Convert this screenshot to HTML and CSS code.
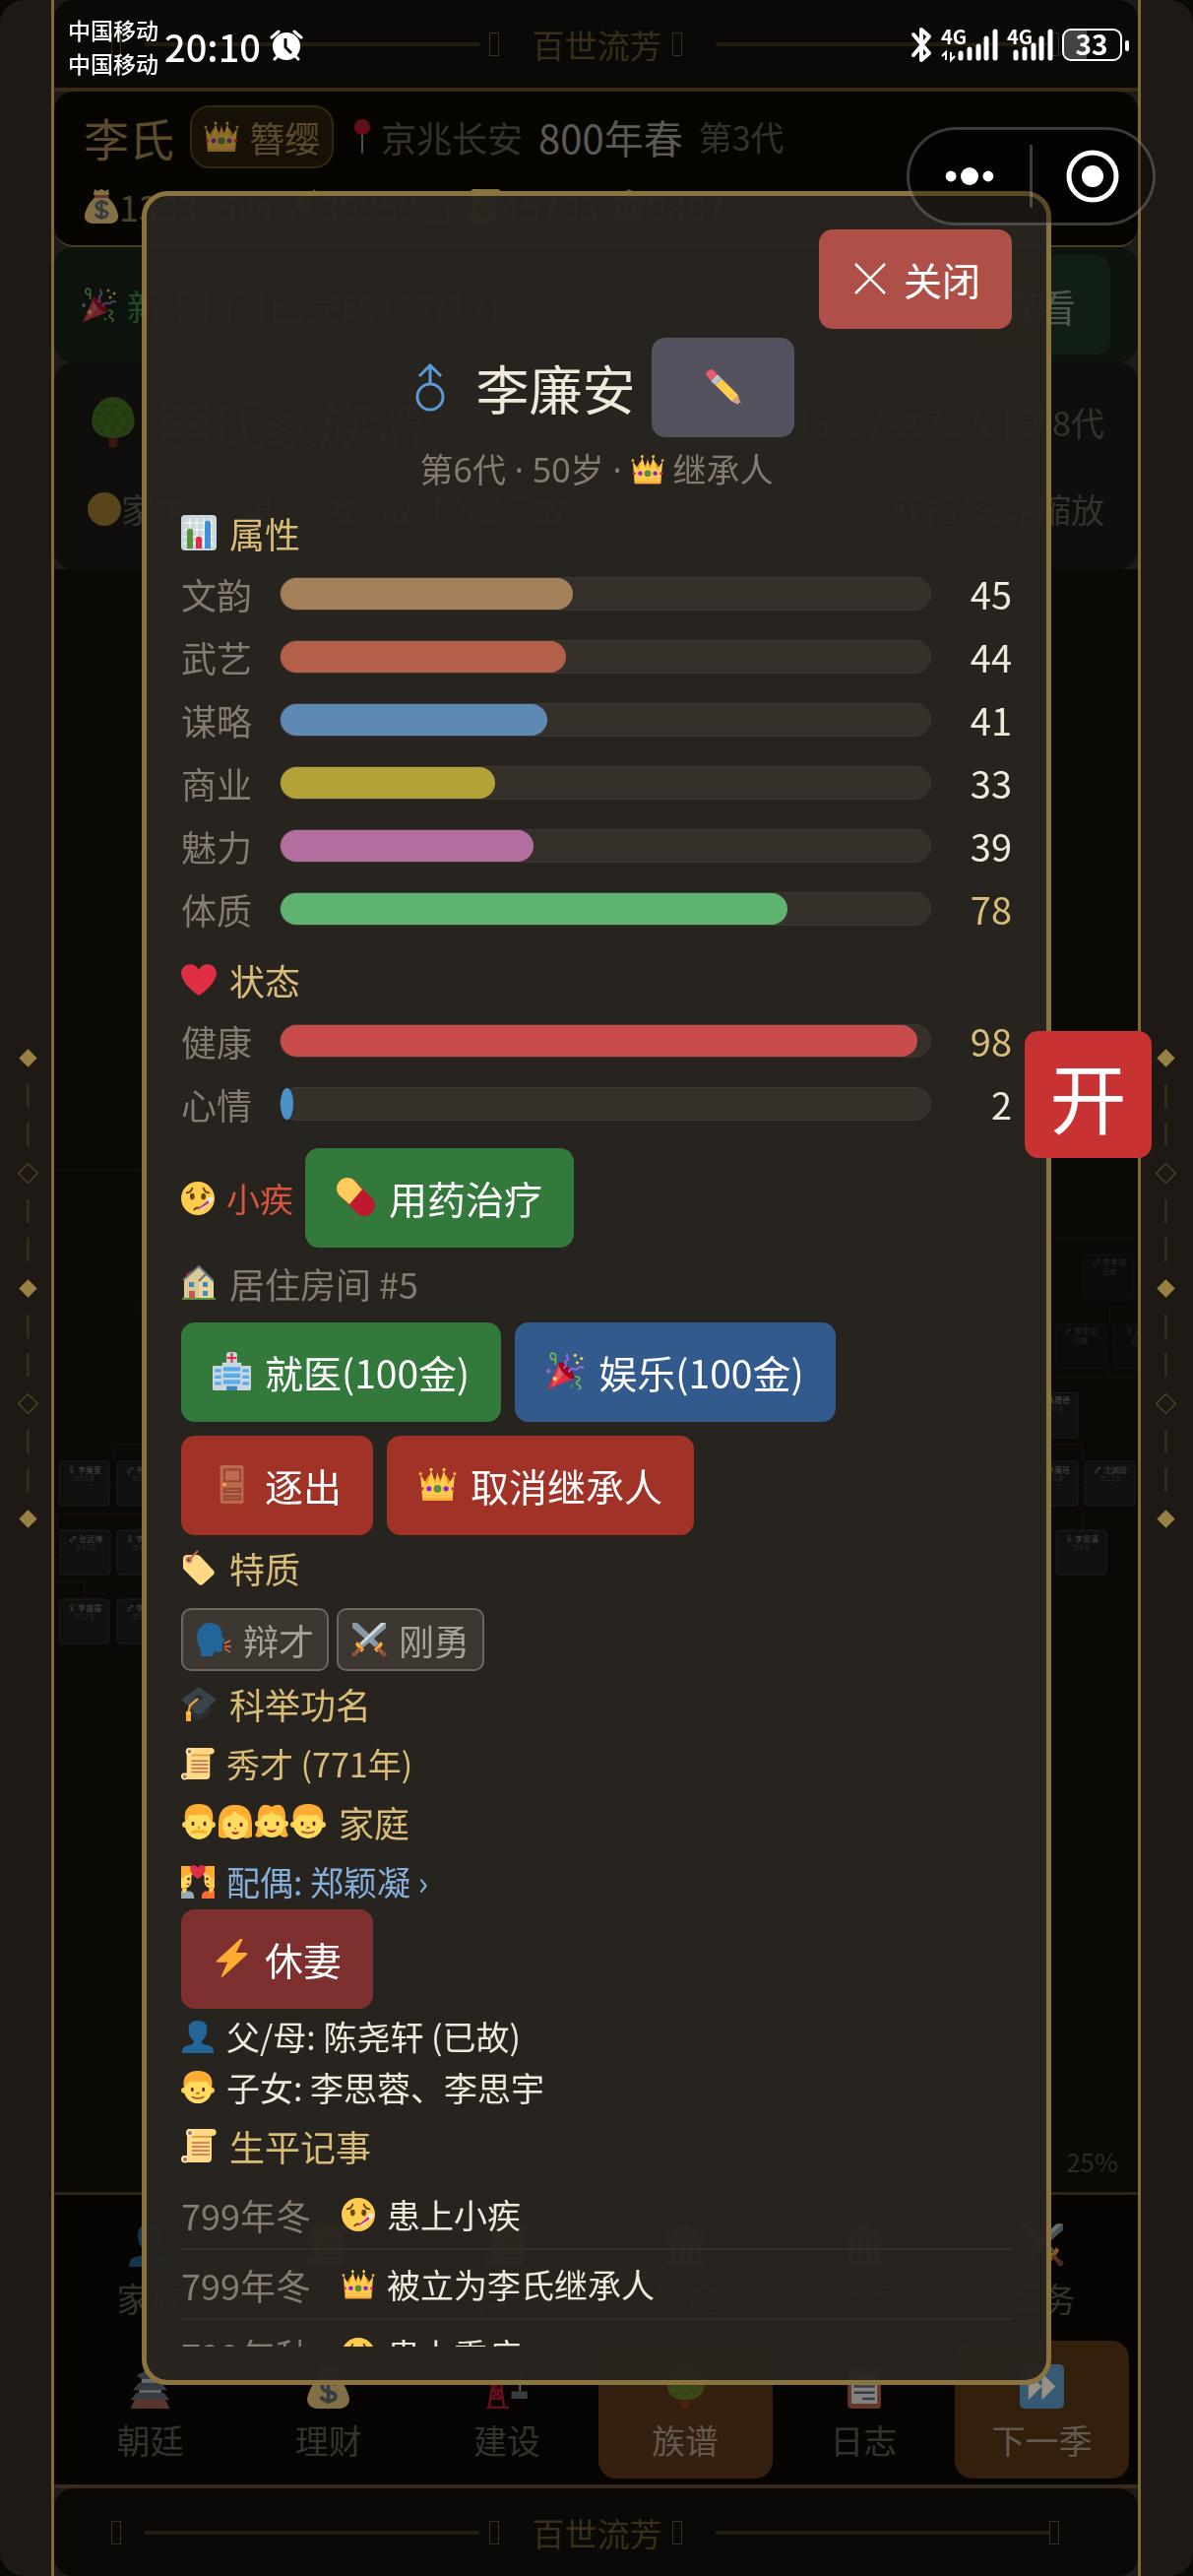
FILE: index.html
```html
<!DOCTYPE html>
<html lang="zh-CN">
<head>
    <meta charset="UTF-8">
    <title>百世流芳</title>
    <meta name="viewport" content="width=device-width, initial-scale=1.0">
    <link rel="stylesheet" href="styles.css">
</head>
<body>
    <!-- Icon sprite -->
    <svg class="sprite" aria-hidden="true">
        <symbol id="crown" viewBox="0 0 36 36">
            <path d="M5 17l5-8 3 8 5-8 5 8 3-8 5 8v6H5z" fill="#f4900c"/>
            <path d="M4 33L2 9l6 9 4-13 4 12 2-11 2 11 4-12 4 13 6-9-2 24z" fill="#ffcc4d"/>
            <path d="M4 28h28v5H4z" fill="#ffac33"/><path d="M4 29h28v1H4z" fill="#ffe08a"/>
            <circle cx="2" cy="8" r="1.5" fill="#ffac33"/><circle cx="12" cy="4" r="1.5" fill="#ffcc4d"/><circle cx="24" cy="4" r="1.5" fill="#ffcc4d"/><circle cx="34" cy="8" r="1.5" fill="#ffac33"/>
            <circle cx="18" cy="22" r="3.6" fill="#5c913b"/><circle cx="10" cy="22" r="2.4" fill="#9222c4"/><circle cx="26" cy="22" r="2.4" fill="#9222c4"/>
            <circle cx="3.5" cy="22" r="1.7" fill="#dd2e44"/><circle cx="32.5" cy="22" r="1.7" fill="#dd2e44"/>
        </symbol>
        <symbol id="pin" viewBox="0 0 18 36">
            <path d="M8 13h2v21l-1 2-1-2z" fill="#7f9aab"/><circle cx="9" cy="8" r="8" fill="#be1931"/>
        </symbol>
        <symbol id="money" viewBox="0 0 36 36">
            <path d="M11 1l3 2 4-2 4 2 3-2 1 6H10z" fill="#fdd888"/>
            <path d="M12 9h12c5 4 9 10 11 18 1 5-3 9-8 9H9c-5 0-9-4-8-9 2-8 6-14 11-18z" fill="#fdd888"/>
            <path d="M11 7h14v3H11z" fill="#bf6952"/>
            <path d="M24 17c-2-4-11-4-11 1 0 6 11 3 11 8 0 5-10 5-12 0M18 12v20" fill="none" stroke="#67757f" stroke-width="3"/>
        </symbol>
        <symbol id="wheat" viewBox="0 0 36 36">
            <path d="M5 35C10 22 18 12 31 2" fill="none" stroke="#d99e42" stroke-width="2"/>
            <path d="M13 20C8 15 12 9 17 6c3 6 1 11-4 14zM18 15c-2-7 4-11 10-12 0 7-4 11-10 12zM14 21c8-4 13-2 15 3-7 3-12 2-15-3z" fill="#e9ae45"/>
        </symbol>
        <symbol id="scroll" viewBox="0 0 36 36">
            <path d="M7 1h25c5 0 5 7 0 7h-1v23c0 3-2 4-4 4H3c-4 0-4-7 0-7h3V5z" fill="#ffd983"/>
            <path d="M11 8h20v2H11z" fill="#e39f3d"/>
            <circle cx="9" cy="5" r="4" fill="#ffe8b6"/><circle cx="9" cy="5" r="2" fill="#be6b56"/>
            <circle cx="4" cy="32" r="3.5" fill="#ffe8b6"/><circle cx="4" cy="32" r="2" fill="#be6b56"/>
            <path d="M11 15h18M11 19h18M11 23h18M11 27h18" stroke="#c1694f" stroke-width="1.5"/>
        </symbol>
        <symbol id="bank" viewBox="0 0 36 36">
            <path d="M18 1l16 9v4H2v-4zM3 31h30v4H3zM6 15h4v15H6zM13 15h4v15h-4zM20 15h4v15h-4zM27 15h4v15h-4z" fill="#9aa7b0"/>
        </symbol>
        <symbol id="party" viewBox="0 0 36 36">
            <path d="M1 35L12 10c5 2 12 9 14 15z" fill="#dd2e44"/><path d="M12 10c-2 5 9 17 14 15 2-4-9-17-14-15z" fill="#a0041e"/>
            <path d="M5 34l7-20 4 7z" fill="#ea596e"/>
            <path d="M8 12c2-3 1-5-1-5-4 0-4-6-1-6 4 0 3 5 2 8M27 23c5 0 5 3 3 4s-3 3 0 4 3 3 0 4" fill="none" stroke="#77b255" stroke-width="1.5"/>
            <path d="M16 15c6-3-1-5 3-7s-2-4 1-6M21 19c3-7 6-1 8-3s2-3 6-1" fill="none" stroke="#9266cc" stroke-width="2"/>
            <circle cx="27" cy="3" r="1.5" fill="#ffcc4d"/><circle cx="33" cy="6" r="1.5" fill="#ffcc4d"/><circle cx="29" cy="10" r="1.5" fill="#ffcc4d"/><circle cx="8" cy="25" r="2" fill="#ffcc4d"/><circle cx="2" cy="18" r="2" fill="#9266cc"/><circle cx="24" cy="32" r="1.3" fill="#5c913b"/>
        </symbol>
        <symbol id="tree" viewBox="0 0 36 36">
            <path d="M15 26h6v9l-3 1-3-1z" fill="#662113"/>
            <path d="M18 0c9 0 15 9 15 17s-6 12-15 12S3 25 3 17 9 0 18 0z" fill="#3e721d"/>
            <g fill="#2c5413"><circle cx="12" cy="6" r="1"/><circle cx="20" cy="6" r="1"/><circle cx="8" cy="12" r="1"/><circle cx="16" cy="12" r="1"/><circle cx="25" cy="11" r="1"/><circle cx="6" cy="18" r="1"/><circle cx="13" cy="18" r="1"/><circle cx="21" cy="18" r="1"/><circle cx="29" cy="18" r="1"/><circle cx="10" cy="24" r="1"/><circle cx="18" cy="24" r="1"/><circle cx="26" cy="24" r="1"/></g>
        </symbol>
        <symbol id="pencil" viewBox="0 0 36 36">
            <path d="M2 5c1-3 4-4 6-4l5 5-6 6-5-6z" fill="#ea596e"/>
            <path d="M7 12l6-6 4 4-6 6z" fill="#ccd6dd"/><path d="M8 14l7-7M10 15l6-6" stroke="#99aab5"/>
            <path d="M11 16l6-6 15 15-1 4-5 2z" fill="#ffcc4d"/>
            <path d="M26 31l6-6 3 9-1 1z" fill="#d99e82"/><path d="M32 34l2-2 1 3z" fill="#292f33"/>
        </symbol>
        <symbol id="chart" viewBox="0 0 36 36">
            <rect width="36" height="36" rx="4" fill="#ccd6dd"/>
            <path d="M3 8h30M3 15h30M3 22h30M3 29h30M9 3v30M16 3v30M23 3v30M30 3v30" stroke="#fff" stroke-width="1"/>
            <path d="M6 34V16c0-3 6-3 6 0v18z" fill="#5c913b"/><path d="M15 34V24c0-3 6-3 6 0v10z" fill="#dd2e44"/><path d="M24 34V8c0-3 6-3 6 0v26z" fill="#3b94d9"/>
        </symbol>
        <symbol id="heart" viewBox="0 0 36 36">
            <path d="M18 34C10 29 1 20 0 12 0 1 14-1 18 8c4-9 18-7 18 4-1 8-10 17-18 22z" fill="#dd2e44"/>
        </symbol>
        <symbol id="sick" viewBox="0 0 36 36">
            <circle cx="18" cy="18" r="18" fill="#ffcc4d"/>
            <ellipse cx="12" cy="16" rx="2.5" ry="3.5" fill="#664500"/><ellipse cx="24" cy="16" rx="2.5" ry="3.5" fill="#664500"/>
            <path d="M6 12c3 0 5-2 6-5M24 7c1 3 3 5 6 5M14 30c4-5 6 1 10-3" fill="none" stroke="#664500" stroke-width="2" stroke-linecap="round"/>
            <path d="M18 29l12-12c3-2 6 1 4 4L22 31z" fill="#e6e7e8"/><path d="M18 29l11-9 1 3-11 7z" fill="#dd2e44"/>
        </symbol>
        <symbol id="pill" viewBox="0 0 36 36">
            <path d="M3 3c4-4 10-4 14 0l16 16c4 4 4 10 0 14s-10 4-14 0L3 17c-4-4-4-10 0-14z" fill="#be1931"/>
            <path d="M3 3c4-4 10-4 14 0l7 8-12 14-9-8c-4-4-4-10 0-14z" fill="#ffcc5c"/>
        </symbol>
        <symbol id="house" viewBox="0 0 36 36">
            <path d="M5 8l5-3v8H5z" fill="#8a1a28"/><path d="M3 14L18 1l14 14v18H3z" fill="#dcc894"/><path d="M18 15l7-6 8 8v16H18z" fill="#e8d49c"/>
            <path d="M2 15L18 1l15 15M18 16l7-7" fill="none" stroke="#67757f" stroke-width="2"/>
            <path d="M8 17h5v5H8zM22 17h5v5h-5zM22 26h5v5h-5z" fill="#4289c1"/><path d="M8 26h6v7H8z" fill="#c1594f"/>
            <path d="M1 33h34v2H1z" fill="#5c913b"/>
        </symbol>
        <symbol id="hospital" viewBox="0 0 36 36">
            <path d="M0 13h9v-3h4V2c0-3 10-3 10 0v8h4v3h9v21c0 2-1 2-2 2H2c-1 0-2 0-2-2z" fill="#ccd6dd"/>
            <path d="M18 1v9M13.500 5.500h9" stroke="#dd2e44" stroke-width="2"/>
            <path d="M10 14h16v4H10zM10 20h16v4H10zM10 26h16v4H10zM2 16h6v3H2zM2 22h6v3H2zM2 28h6v3H2zM28 16h6v3h-6zM28 22h6v3h-6zM28 28h6v3h-6z" fill="#55acee"/>
            <path d="M13 32h10v4H13z" fill="#3b88c3"/>
        </symbol>
        <symbol id="door" viewBox="0 0 36 36">
            <rect x="7" width="22" height="36" rx="2" fill="#c1694f"/>
            <path d="M11 4h15v11H11zM11 22h15v3H11zM11 29h15v3H11z" fill="none" stroke="#914b38" stroke-width="2"/><circle cx="11" cy="18" r="1.7" fill="#ffac33"/>
        </symbol>
        <symbol id="tag" viewBox="0 0 36 36">
            <path d="M2 9c0-3 2-4 4-4h10c2 0 3 1 4 2l13 14c1 1 1 3 0 4L22 35c-1 1-3 1-4 0L3 20c-1-1-1-2-1-4z" fill="#ffd983"/>
            <circle cx="8" cy="10" r="3.5" fill="#c88774"/><circle cx="8" cy="10" r="1.7" fill="#662113"/>
            <path d="M8 10l9-9" stroke="#c1694f" stroke-width="2"/>
        </symbol>
        <symbol id="speak" viewBox="0 0 36 36">
            <path d="M5 35c2-6-4-11-4-19C1 7 7 1 14 1c8 0 13 5 12 13l4 5-3 2v7c0 3-4 3-8 2l-2 5z" fill="#226699"/>
            <path d="M29 22l6-3M29 25h7M29 27l6 4" stroke="#e8703a" stroke-width="1.5"/>
        </symbol>
        <symbol id="swords" viewBox="0 0 36 36">
            <path d="M1 1h5l22 21-4 4L1 6z" fill="#8899a6"/><path d="M35 1h-5L8 22l4 4L35 6z" fill="#ccd6dd"/><path d="M35 1L10 24l2 2L35 6z" fill="#8899a6"/>
            <path d="M23 28l7-8 2 3-6 8zM13 28l-7-8-2 3 6 8z" fill="#ffac33"/>
            <path d="M27 27l6 6M9 27l-6 6" stroke="#aa5a44" stroke-width="3.5"/><circle cx="33" cy="33" r="2.5" fill="#8a4b38"/><circle cx="3" cy="33" r="2.5" fill="#8a4b38"/>
        </symbol>
        <symbol id="cap" viewBox="0 0 36 36">
            <path d="M7 17l11 8 12-9v10c0 2-8 8-12 9-4-1-11-6-11-9z" fill="#292f33"/>
            <path d="M0 14L18 1l18 13-14 13c-3 2-5 2-8 0z" fill="#3a434a"/><ellipse cx="18" cy="12" rx="4" ry="2.5" fill="#292f33"/>
            <path d="M17 13L9 20l-2 8" fill="none" stroke="#ffac33" stroke-width="2"/><path d="M5 26h5v10H5z" fill="#ffac33"/><path d="M5 28h5" stroke="#ffd983"/>
        </symbol>
        <symbol id="man" viewBox="0 0 36 36">
            <circle cx="4" cy="21" r="3" fill="#ffcc4d"/><circle cx="32" cy="21" r="3" fill="#ffcc4d"/><ellipse cx="18" cy="21" rx="14" ry="15" fill="#ffdc5d"/>
            <path d="M18 0C8 0 2 5 4 18c2 0 2-6 5-7 6 2 13-2 17 0 3 1 4 7 6 7C34 5 28 0 18 0z" fill="#ffac33"/>
            <ellipse cx="12" cy="20" rx="1.5" ry="2.3" fill="#662113"/><ellipse cx="24" cy="20" rx="1.5" ry="2.3" fill="#662113"/><path d="M17 24h2" stroke="#c1694f" stroke-width="1.5"/>
            <path d="M18 27c4-2 8 1 9 2-4 2-7 0-9 0s-5 2-9 0c1-1 5-4 9-2z" fill="#ffac33"/>
        </symbol>
        <symbol id="woman" viewBox="0 0 36 36">
            <path d="M18 1C5 1 1 9 1 21v12c3 2 6 2 9 1h16c3 1 6 1 9-1V21C35 9 31 1 18 1z" fill="#ffac33"/>
            <path d="M5 20c0-3 2-5 4-7 5-1 7-4 8-6 3 4 9 5 12 8 2 2 2 4 2 7 0 9-6 14-13 14S5 30 5 20z" fill="#ffdc5d"/>
            <ellipse cx="12" cy="21" rx="1.5" ry="2.3" fill="#662113"/><ellipse cx="24" cy="21" rx="1.5" ry="2.3" fill="#662113"/><path d="M17 25h2" stroke="#c1694f" stroke-width="1.5"/>
            <path d="M14 28c3 1 5 1 8 0-1 4-7 4-8 0z" fill="#be1931"/>
        </symbol>
        <symbol id="girl" viewBox="0 0 36 36">
            <path d="M18 3C9-3 3 3 4 17c0 7-1 12-3 15 3 3 7 2 9-1h16c2 3 6 4 9 1-2-3-3-8-3-15C33 3 27-3 18 3z" fill="#ffac33"/>
            <circle cx="4" cy="20" r="3" fill="#ffcc4d"/><circle cx="32" cy="20" r="3" fill="#ffcc4d"/>
            <path d="M5 19c1-3 3-7 5-8 4 1 7-1 8-4 1 3 4 5 8 4 2 1 4 5 5 8 0 10-6 15-13 15S5 29 5 19z" fill="#ffdc5d"/>
            <ellipse cx="12" cy="20" rx="1.5" ry="2.3" fill="#662113"/><ellipse cx="24" cy="20" rx="1.5" ry="2.3" fill="#662113"/>
            <path d="M13 26c3 1 7 1 10 0-1 4-9 4-10 0z" fill="#be1931"/>
        </symbol>
        <symbol id="boy" viewBox="0 0 36 36">
            <circle cx="3" cy="21" r="3" fill="#ffcc4d"/><circle cx="33" cy="21" r="3" fill="#ffcc4d"/><ellipse cx="18" cy="20" rx="15" ry="15" fill="#ffdc5d"/>
            <path d="M18 0C7 0 1 6 3 18c2-1 3-5 6-7 6 1 12 1 18 0 3 2 4 6 6 7C35 6 29 0 18 0z" fill="#ffac33"/>
            <ellipse cx="12" cy="20" rx="1.5" ry="2.3" fill="#662113"/><ellipse cx="24" cy="20" rx="1.5" ry="2.3" fill="#662113"/><path d="M17 24h2M12 28c3 2 9 2 12 0" fill="none" stroke="#b0553a" stroke-width="1.8" stroke-linecap="round"/>
        </symbol>
        <symbol id="couple" viewBox="0 0 36 36">
            <path d="M0 1h8c5 2 6 8 3 11v6c0 4-4 7-7 7H0z" fill="#ffdc5d"/><path d="M36 1h-8c-5 2-6 8-3 11v6c0 4 4 7 7 7h4z" fill="#ffdc5d"/>
            <path d="M0 1h10l1 8c-4 3-6 0-8 5H0zM36 1H26l-1 8c4 3 6 0 8 5h3z" fill="#ffac33"/><path d="M30 10h6v15h-4z" fill="#ffac33" opacity=".5"/>
            <path d="M18 15C12 11 9 7 10 3c1-4 6-4 8 0 2-4 7-4 8 0 1 4-2 8-8 12z" fill="#dd2e44"/>
            <circle cx="8" cy="15" r="1.5" fill="#662113"/><circle cx="28" cy="15" r="1.5" fill="#662113"/><path d="M6 21l3-1M30 21l-3-1" stroke="#be1931" stroke-width="1.5"/>
            <path d="M0 36v-8h9c4 0 5 4 5 8z" fill="#9aaab4"/><path d="M36 36v-8h-9c-4 0-5 4-5 8z" fill="#ff6a35"/><path d="M1 25h5v3l-2 2-3-1zM30 25h5v3l-2 2-3-1z" fill="#ffcc4d"/>
        </symbol>
        <symbol id="bolt" viewBox="0 0 36 36">
            <path d="M26 0L4 20c-1 1 0 2 1 2h9L8 35c0 1 1 1 2 0l22-20c1-1 0-2-1-2h-9l6-12c0-1-1-2-2-1z" fill="#ffac33"/>
        </symbol>
        <symbol id="bust" viewBox="0 0 36 36">
            <path d="M1 36c0-5 1-7 5-8 6-1 8-2 8-5-3-2-6-6-6-13C8 4 12 1 18 1s10 3 10 9c0 7-3 11-6 13 0 3 2 4 8 5 4 1 5 3 5 8z" fill="#226699"/>
        </symbol>
        <symbol id="pagoda" viewBox="0 0 36 36">
            <path d="M16 0h4l1 5 8 4-4 3H11L7 9l8-4z" fill="#67757f"/><path d="M11 12h14v4H11zM9 20h18v4H9z" fill="#ccd6dd"/>
            <path d="M9 15h18l5 6H4zM7 23h22l5 6H2z" fill="#67757f"/><path d="M6 28h24l4 8H2z" fill="#a9685c"/>
        </symbol>
        <symbol id="crane" viewBox="0 0 36 36">
            <path d="M4 35L8 5h4l4 30zM5 28h10M6 21h8M7 14h6M5 28l9-7M6 21l7-7M15 28l-9-7M2 35h18" fill="none" stroke="#be1931" stroke-width="2"/><path d="M3 6h28v3H3z" fill="#be1931"/>
            <path d="M29 9v13" stroke="#ffac33" stroke-width="1.5"/><path d="M22 22h13v6H22z" fill="#67757f"/>
        </symbol>
        <symbol id="clipboard" viewBox="0 0 36 36">
            <rect x="5" y="3" width="27" height="33" rx="3" fill="#c1694f"/><path d="M8 7h21v25H8z" fill="#fff"/><path d="M12 5h3l3-4 3 4h4v4H12z" fill="#99aab5"/>
            <path d="M10 13h17M10 18h17M10 23h17M17 28h10" stroke="#67757f" stroke-width="2"/>
        </symbol>
        <symbol id="next" viewBox="0 0 36 36">
            <rect width="36" height="36" rx="4" fill="#3b94d9"/><path d="M7 7l11 11L7 29zM18 7l11 11-11 11z" fill="#fff"/>
        </symbol>
    </svg>

    <div class="game">
        <div class="rail rail-left">
            <i class="gem"></i><i class="dash"></i><i class="dash"></i><i class="gem hollow"></i><i class="dash"></i><i class="dash"></i><i class="gem"></i><i class="dash"></i><i class="dash"></i><i class="gem hollow"></i><i class="dash"></i><i class="dash"></i><i class="gem"></i>
        </div>

        <main class="app">
            <div class="banner banner-top">
                <i class="ornament"></i><i class="rule"></i>
                <div class="banner-title"><i class="ornament"></i><span>百世流芳</span><i class="ornament"></i></div>
                <i class="rule"></i><i class="ornament"></i>
            </div>

            <header class="panel header">
                <div class="header-row">
                    <h1>李氏</h1>
                    <span class="rank"><svg class="icon"><use href="#crown"/></svg>簪缨</span>
                    <span class="place"><svg class="icon-pin"><use href="#pin"/></svg>京兆长安</span>
                    <span class="year">800年春</span>
                    <span class="gen">第3代</span>
                </div>
                <div class="header-row resources">
                    <span><svg class="icon"><use href="#money"/></svg>133315两</span>
                    <span><svg class="icon"><use href="#wheat"/></svg>39959石</span>
                    <span><svg class="icon"><use href="#scroll"/></svg>45703</span>
                    <span><svg class="icon"><use href="#bank"/></svg>9887</span>
                </div>
            </header>

            <section class="panel notice">
                <svg class="icon"><use href="#party"/></svg>
                <span>新手指引已完成 (12/12)</span>
                <button class="btn btn-view">查看</button>
            </section>

            <section class="panel clan">
                <div class="clan-row">
                    <svg class="icon-tree"><use href="#tree"/></svg>
                    <h2>李氏家族谱</h2>
                    <span class="push">在世46人 / 共72人 | 第8代</span>
                </div>
                <div class="clan-row legend">
                    <span><i class="dot dot-head"></i>家主</span>
                    <span><i class="dot dot-male"></i>男</span>
                    <span><i class="dot dot-female"></i>女</span>
                    <span>故</span>
                    <span>隐藏已故</span>
                    <span class="push">双指/滚轮缩放</span>
                </div>
            </section>

            <!-- Family tree canvas -->
            <section class="canvas">
                <svg class="tree-map">
                    <g transform="translate(-54 -578)">
                        <path class="link" d="M54 1188H150M54 1328H150M114 1482v-15h34M110 1507h8M57 1553v-15h92M54 1577h6M54 1607h31v17M1066 1258h89v16M1151 1296h5M1155 1320v8h-29v16M1122 1366h8M1126 1390v8M1066 1398h90M1066 1467h32v16M1094 1507h8M1098 1530v23"/>
                        <g class="person"><rect x="59" y="1484" width="51" height="45" rx="3"/><text x="85" y="1496">♀ 李廉萱</text><text class="age" x="85" y="1504">年60岁</text></g>
                        <g class="person"><rect x="118" y="1484" width="51" height="45" rx="3"/><text x="144" y="1496">♂ 韦文远</text><text class="age" x="144" y="1504">年60岁</text></g>
                        <g class="person"><rect x="60" y="1554" width="51" height="45" rx="3"/><text x="86" y="1566">♂ 张武博</text><text class="age" x="86" y="1574">年40岁</text></g>
                        <g class="person"><rect x="118" y="1554" width="51" height="45" rx="3"/><text x="144" y="1566">♀ 李思琪</text><text class="age" x="144" y="1574">年40岁</text></g>
                        <g class="person"><rect x="59" y="1624" width="51" height="45" rx="3"/><text x="85" y="1636">♀ 李盛霜</text><text class="age" x="85" y="1644">年12岁</text></g>
                        <g class="person"><rect x="118" y="1624" width="51" height="45" rx="3"/><text x="144" y="1636">♂ 李盛文</text><text class="age" x="144" y="1644">年11岁</text></g>
                        <g class="person gone"><rect x="1100" y="1274" width="51" height="46" rx="3"/><text x="1126" y="1285">♂ 李孝瑄</text><text class="age" x="1126" y="1294">已故</text></g>
                        <g class="person gone"><rect x="1071" y="1344" width="51" height="46" rx="3"/><text x="1097" y="1355">♂ 李学玄</text><text class="age" x="1097" y="1364">已故</text></g>
                        <g class="person gone"><rect x="1130" y="1344" width="51" height="46" rx="3"/><text x="1155" y="1355">♀ 郑文</text><text class="age" x="1155" y="1364">已故</text></g>
                        <g class="person"><rect x="1043" y="1414" width="51" height="46" rx="3"/><text x="1069" y="1425">♂ 韩晟德</text><text class="age" x="1069" y="1434">年70岁</text></g>
                        <g class="person"><rect x="1043" y="1484" width="51" height="45" rx="3"/><text x="1069" y="1496">♀ 李廉瑶</text><text class="age" x="1069" y="1504">年25岁</text></g>
                        <g class="person"><rect x="1101" y="1484" width="51" height="45" rx="3"/><text x="1127" y="1496">♂ 沈渊琰</text><text class="age" x="1127" y="1504">年23岁</text></g>
                        <g class="person"><rect x="1072" y="1554" width="51" height="45" rx="3"/><text x="1098" y="1566">♀ 李思清</text><text class="age" x="1098" y="1574">年4岁</text></g>
                    </g>
                </svg>
                <span class="zoom">25%</span>
            </section>

            <nav class="nav">
                <button><svg class="icon"><use href="#bust"/></svg>家族</button>
                <button><svg class="icon"><use href="#scroll"/></svg>族学</button>
                <button><svg class="icon"><use href="#scroll"/></svg>科举</button>
                <button><svg class="icon"><use href="#bank"/></svg>仕途</button>
                <button><svg class="icon"><use href="#bank"/></svg>世家</button>
                <button><svg class="icon"><use href="#swords"/></svg>军务</button>
                <button><svg class="icon"><use href="#pagoda"/></svg>朝廷</button>
                <button><svg class="icon"><use href="#money"/></svg>理财</button>
                <button><svg class="icon"><use href="#crane"/></svg>建设</button>
                <button class="active"><svg class="icon"><use href="#tree"/></svg>族谱</button>
                <button><svg class="icon"><use href="#clipboard"/></svg>日志</button>
                <button class="season"><svg class="icon"><use href="#next"/></svg>下一季</button>
            </nav>

            <div class="banner">
                <i class="ornament"></i><i class="rule"></i>
                <div class="banner-title"><i class="ornament"></i><span>百世流芳</span><i class="ornament"></i></div>
                <i class="rule"></i><i class="ornament"></i>
            </div>
        </main>

        <div class="rail rail-right">
            <i class="gem"></i><i class="dash"></i><i class="dash"></i><i class="gem hollow"></i><i class="dash"></i><i class="dash"></i><i class="gem"></i><i class="dash"></i><i class="dash"></i><i class="gem hollow"></i><i class="dash"></i><i class="dash"></i><i class="gem"></i>
        </div>
    </div>

    <!-- Member details -->
    <div class="overlay">
        <div class="modal" role="dialog" aria-label="李廉安">
            <div class="modal-body">
                <div class="close-row">
                    <button class="btn btn-close"><svg class="icon-x" viewBox="0 0 32 32"><path d="M4 4l24 24M28 4L4 28"/></svg>关闭</button>
                </div>
                <div class="name-row">
                    <svg class="icon-male" viewBox="0 0 30 50"><circle cx="15" cy="34" r="13"/><path d="M15 21V3M4 13L15 2l11 11"/></svg>
                    <h2>李廉安</h2>
                    <button class="btn btn-edit" aria-label="改名"><svg class="icon"><use href="#pencil"/></svg></button>
                </div>
                <p class="subtitle">第6代 · 50岁 · <svg class="icon"><use href="#crown"/></svg> 继承人</p>

                <h3><svg class="icon"><use href="#chart"/></svg>属性</h3>
                <div class="stats">
                    <div class="stat"><span>文韵</span><div class="bar"><div class="fill wen" style="width: 45%"></div></div><b>45</b></div>
                    <div class="stat"><span>武艺</span><div class="bar"><div class="fill wu" style="width: 44%"></div></div><b>44</b></div>
                    <div class="stat"><span>谋略</span><div class="bar"><div class="fill mou" style="width: 41%"></div></div><b>41</b></div>
                    <div class="stat"><span>商业</span><div class="bar"><div class="fill shang" style="width: 33%"></div></div><b>33</b></div>
                    <div class="stat"><span>魅力</span><div class="bar"><div class="fill mei" style="width: 39%"></div></div><b>39</b></div>
                    <div class="stat"><span>体质</span><div class="bar"><div class="fill ti" style="width: 78%"></div></div><b class="high">78</b></div>
                </div>

                <h3><svg class="icon"><use href="#heart"/></svg>状态</h3>
                <div class="stats">
                    <div class="stat"><span>健康</span><div class="bar"><div class="fill health" style="width: 98%"></div></div><b class="high">98</b></div>
                    <div class="stat"><span>心情</span><div class="bar"><div class="fill mood" style="width: 2%"></div></div><b>2</b></div>
                </div>

                <div class="illness">
                    <span class="line"><svg class="icon"><use href="#sick"/></svg>小疾</span>
                    <button class="btn btn-green"><svg class="icon"><use href="#pill"/></svg>用药治疗</button>
                </div>
                <p class="room"><svg class="icon"><use href="#house"/></svg>居住房间 #5</p>
                <div class="actions">
                    <button class="btn btn-green"><svg class="icon"><use href="#hospital"/></svg>就医(100金)</button>
                    <button class="btn btn-blue"><svg class="icon"><use href="#party"/></svg>娱乐(100金)</button>
                    <button class="btn btn-red"><svg class="icon"><use href="#door"/></svg>逐出</button>
                    <button class="btn btn-red"><svg class="icon"><use href="#crown"/></svg>取消继承人</button>
                </div>

                <h3><svg class="icon"><use href="#tag"/></svg>特质</h3>
                <div class="traits">
                    <span class="trait"><svg class="icon"><use href="#speak"/></svg>辩才</span>
                    <span class="trait"><svg class="icon"><use href="#swords"/></svg>刚勇</span>
                </div>

                <h3><svg class="icon"><use href="#cap"/></svg>科举功名</h3>
                <p class="line gold"><svg class="icon"><use href="#scroll"/></svg>秀才 (771年)</p>

                <h3><span class="faces"><svg class="icon"><use href="#man"/></svg><svg class="icon"><use href="#woman"/></svg><svg class="icon"><use href="#girl"/></svg><svg class="icon"><use href="#boy"/></svg></span>家庭</h3>
                <a class="line spouse" href="#"><svg class="icon"><use href="#couple"/></svg>配偶: 郑颖凝 ›</a>
                <button class="btn btn-divorce"><svg class="icon"><use href="#bolt"/></svg>休妻</button>
                <p class="line"><svg class="icon"><use href="#bust"/></svg>父/母: 陈尧轩 (已故)</p>
                <p class="line"><svg class="icon"><use href="#boy"/></svg>子女: 李思蓉、李思宇</p>

                <h3><svg class="icon"><use href="#scroll"/></svg>生平记事</h3>
                <ul class="log">
                    <li><time>799年冬</time><span class="line"><svg class="icon"><use href="#sick"/></svg>患上小疾</span></li>
                    <li><time>799年冬</time><span class="line"><svg class="icon"><use href="#crown"/></svg>被立为李氏继承人</span></li>
                    <li><time>799年秋</time><span class="line"><svg class="icon"><use href="#sick"/></svg>患上重病</span></li>
                </ul>
            </div>
        </div>
    </div>

    <!-- Phone status bar -->
    <div class="statusbar">
        <div class="carriers"><span>中国移动</span><span>中国移动</span></div>
        <span class="clock">20:10</span>
        <svg class="alarm" viewBox="0 0 34 34">
            <path d="M2 8l7-6M32 8l-7-6M5 30l5-5M29 30l-5-5" stroke="#fff" stroke-width="3" stroke-linecap="round"/><circle cx="17" cy="17" r="14" fill="#fff"/><path d="M16 9v9l6 6" fill="none" stroke="#0a0907" stroke-width="3"/>
        </svg>
        <svg class="signals" viewBox="0 0 224 40">
            <path d="M3 8l16 19-8 7V3l8 7L3 29" fill="none" stroke="#fff" stroke-width="4" stroke-linejoin="round" stroke-linecap="round"/>
            <text x="31" y="18">4G</text><text x="98" y="18">4G</text>
            <path d="M36 34V26l-4 4M41 26v8l4-4" fill="none" stroke="#fff" stroke-width="2"/>
            <path d="M51 32v-5M60 32v-9M69 32V20M77 32V12M86 32V5M107 32v-6M116 32v-9M125 32V19M133 32V12M142 32V5" stroke="#fff" stroke-width="5" stroke-linecap="round"/>
            <path d="M163 4h16v29h-16c-5 0-7-3-7-7V11c0-4 2-7 7-7z" fill="#444"/><rect x="155" y="3" width="59" height="31" rx="8" fill="none" stroke="#fff" stroke-width="2"/><path d="M220 16v7" stroke="#fff" stroke-width="4" stroke-linecap="round"/>
            <text class="charge" x="184" y="29">33</text>
        </svg>
    </div>

    <div class="capsule">
        <button aria-label="更多"><svg viewBox="0 0 60 24"><circle cx="9" cy="12" r="6"/><circle cx="30" cy="12" r="10"/><circle cx="51" cy="12" r="6"/></svg></button>
        <button aria-label="关闭小程序"><svg viewBox="0 0 54 54"><circle cx="27" cy="27" r="24" fill="none" stroke="#fff" stroke-width="5"/><circle cx="27" cy="27" r="11"/></svg></button>
    </div>
    <button class="open">开</button>
</body>
</html>
```
FILE: styles.css
```css
* {
    box-sizing: border-box;
}

body {
    margin: 0;
    background-color: #0b0906;
    color: #35322d;
    font-family: "Noto Sans CJK SC", "Noto Sans", sans-serif;
    font-size: 36px;
    line-height: 54px;
}

h1,
h2,
h3,
p,
ul {
    margin: 0;
    padding: 0;
    font-weight: normal;
}

button {
    border: none;
    background: none;
    padding: 0;
    color: inherit;
    font: inherit;
    cursor: pointer;
}

.sprite {
    display: none;
}

.icon {
    width: 1em;
    height: 1em;
    flex: none;
}

/* Page frame */
.game {
    display: grid;
    grid-template-columns: 55px 1fr 56px;
    min-height: 100vh;
}

.rail {
    display: flex;
    flex-direction: column;
    align-items: center;
    justify-content: center;
    background-color: #1e1914;
}

.rail-left {
    padding-left: 4px;
    border-right: 3px solid #7f673a;
    border-radius: 24px 0 0 24px;
}

.rail-right {
    padding-right: 3px;
    border-left: 3px solid #7f673a;
    border-radius: 0 24px 24px 0;
}

.gem,
.dash {
    height: 39px;
    display: flex;
    align-items: center;
}

.gem::before {
    content: "";
    width: 13px;
    height: 13px;
    background-color: #988142;
    transform: rotate(45deg);
}

.gem.hollow::before {
    background: none;
    border: 1px solid #66532c;
}

.dash::before {
    content: "";
    width: 3px;
    height: 24px;
    background-color: #352b18;
}

.app {
    display: flex;
    flex-direction: column;
    min-width: 0;
    background-color: #1d1b17;
}

.banner {
    display: flex;
    align-items: center;
    height: 89px;
    padding: 0 56px 0 58px;
    border-radius: 20px;
    background-color: #0a0907;
    color: #382e19;
    font-size: 33px;
}

.banner-top {
    height: 93px;
    border-bottom: 4px solid #382c19;
    border-radius: 20px 20px 0 0;
}

.banner-title {
    display: flex;
    align-items: center;
    gap: 10px;
    padding: 0 10px;
}

.ornament {
    width: 10px;
    height: 24px;
    margin-right: 24px;
    border: 1px solid #382e19;
}

.rule {
    flex: 1;
    height: 4px;
    background-color: #241c0e;
}

.panel {
    border-radius: 20px;
}

.header {
    height: 158px;
    padding: 14px 30px;
    border-bottom: 2px solid #4a3a20;
    background-color: #060502;
}

.header .icon,
.header .icon-pin,
.clan .icon-tree,
.notice .icon,
.nav .icon {
    opacity: 0.5;
}

.header-row {
    display: flex;
    align-items: center;
    gap: 16px;
    height: 64px;
    white-space: nowrap;
}

.header h1 {
    color: #5b4b2c;
    font-size: 46px;
}

.rank,
.place,
.resources span {
    display: flex;
    align-items: center;
}

.rank {
    gap: 10px;
    height: 64px;
    padding: 0 12px;
    border: 2px solid #33270f;
    border-radius: 20px;
    background-color: #171108;
    color: #5b4b2c;
}

.icon-pin {
    width: 18px;
    height: 36px;
    margin: 0 10px 0 4px;
}

.year {
    color: #5c5a54;
    font-size: 40px;
}

.gen {
    font-size: 34px;
}

.resources {
    gap: 12px;
    margin-top: 6px;
    color: #4c4229;
}

.notice {
    display: flex;
    align-items: center;
    gap: 10px;
    height: 117px;
    padding: 0 28px;
    background-color: #0b130c;
    color: #204a2a;
}

.clan {
    height: 210px;
    padding: 30px 34px;
    background-color: #0f0e0c;
}

.clan-row {
    display: flex;
    align-items: center;
    gap: 20px;
    height: 62px;
    font-size: 34px;
    white-space: nowrap;
}

.clan h2 {
    font-size: 54px;
}

.icon-tree {
    width: 52px;
    height: 54px;
}

.push {
    margin-left: auto;
}

.legend {
    margin-top: 26px;
}

.legend span {
    display: flex;
    align-items: center;
}

.dot {
    width: 34px;
    height: 34px;
    border-radius: 50%;
}

.dot-head {
    background-color: #58451c;
}

.dot-male {
    background-color: #151d24;
}

.dot-female {
    background-color: #2a1210;
}

.canvas {
    position: relative;
    flex: 1;
    overflow: hidden;
    background-color: #0b0906;
}

.tree-map {
    position: absolute;
    width: 100%;
    height: 100%;
}

.link {
    fill: none;
    stroke: #210e0e;
    stroke-width: 1;
}

.person rect {
    fill: #10100f;
    stroke: #191c20;
}

.person text {
    fill: #4a4844;
    font-size: 8px;
    text-anchor: middle;
}

.person .age {
    fill: #292724;
    font-size: 7px;
}

.gone rect {
    fill: #0d0c0a;
    stroke: #131210;
}

.gone text {
    fill: #2a2826;
}

.zoom {
    position: absolute;
    right: 20px;
    bottom: 4px;
    color: #2c2a26;
    font-size: 26px;
}

.nav {
    display: grid;
    grid-template-columns: repeat(6, 1fr);
    gap: 4px;
    padding: 4px 9px 6px;
    border-top: 3px solid #2f2512;
    border-bottom: 4px solid #382c19;
    border-radius: 4px;
    background-color: #060503;
}

.nav button {
    display: flex;
    flex-direction: column;
    align-items: center;
    gap: 8px;
    height: 140px;
    padding-top: 24px;
    border-radius: 18px;
    font-size: 34px;
    line-height: 48px;
}

.nav .icon {
    width: 45px;
    height: 45px;
}

.nav .active {
    background-color: #351f0e;
    color: #625a50;
}

.nav .season {
    background-color: #32200c;
    color: #625a50;
}

/* Modal */
.overlay {
    position: fixed;
    inset: 0;
    display: flex;
    padding: 194px 144px;
}

.modal {
    display: flex;
    flex: 1;
    min-width: 0;
    padding: 34px 35px;
    border: 5px solid #8a733e;
    border-radius: 26px;
    background-color: rgba(41, 36, 31, 0.96);
    background-clip: padding-box;
}

.modal-body {
    flex: 1;
    min-width: 0;
    overflow-y: auto;
    scrollbar-width: none;
    color: #efe9dc;
}

.btn {
    display: inline-flex;
    align-items: center;
    justify-content: center;
    gap: 14px;
    height: 101px;
    padding: 0 32px 2px;
    border-radius: 14px;
    color: #fff;
    font-size: 39px;
}

.btn-view {
    margin-left: auto;
    padding: 0 35px;
    background-color: #111e13;
    color: #4f564e;
}

.close-row {
    display: flex;
    justify-content: flex-end;
}

.btn-close {
    background-color: #ae5047;
}

.icon-x {
    width: 40px;
    height: 40px;
    fill: none;
    stroke: #fff;
    stroke-width: 2;
}

.name-row {
    display: flex;
    align-items: center;
    justify-content: center;
    margin-top: 9px;
    padding-left: 16px;
}

.name-row h2 {
    margin: 0 16px 0 32px;
    font-size: 54px;
}

.icon-male {
    width: 30px;
    height: 50px;
    fill: none;
    stroke: #5b9bd5;
    stroke-width: 3;
}

.btn-edit {
    padding: 0 53px;
    background-color: #53525e;
}

.subtitle {
    display: flex;
    align-items: center;
    justify-content: center;
    gap: 9px;
    margin: 6px 0 10px;
    color: #857b6f;
    font-family: "Noto Sans", "Noto Sans CJK SC", sans-serif;
    font-size: 34px;
}

h3 {
    display: flex;
    align-items: center;
    gap: 13px;
    margin: 6px 0 8px;
    color: #d9bc78;
    font-size: 36px;
}

.stats {
    display: grid;
    gap: 10px;
    margin-bottom: 18px;
}

.stat {
    display: grid;
    grid-template-columns: 72px 1fr 54px;
    align-items: center;
    gap: 28px;
    color: #857b6f;
}

.stat b {
    color: #efe9dc;
    font-size: 38px;
    font-weight: normal;
    text-align: right;
}

.stat .high {
    color: #d9bc78;
}

.bar {
    height: 34px;
    border: 1px solid #3d3832;
    border-radius: 17px;
    background-color: #35302a;
}

.fill {
    height: 100%;
    border-radius: 16px;
}

.wen { background-color: #a5815b; }
.wu { background-color: #b35f4a; }
.mou { background-color: #5d89b3; }
.shang { background-color: #b3a238; }
.mei { background-color: #b36ea0; }
.ti { background-color: #5fb370; }
.health { background-color: #c74c4b; }
.mood { background-color: #4a92c8; border-radius: 50%; }

.line {
    display: flex;
    align-items: center;
    gap: 12px;
    font-size: 34px;
    line-height: 52px;
}

.gold {
    color: #d9bc78;
}

.illness {
    display: flex;
    align-items: center;
    gap: 12px;
}

.illness .line {
    color: #d9543f;
}

.room {
    display: flex;
    align-items: center;
    gap: 13px;
    margin: 9px 0 13px;
    color: #857b6f;
}

.actions {
    display: flex;
    flex-wrap: wrap;
    gap: 14px;
    padding-right: 100px;
}

.btn-green { background-color: #33793c; }
.btn-blue { background-color: #325a8c; }
.btn-red { background-color: #a03228; }
.btn-divorce { background-color: #7e302f; }

.traits {
    display: flex;
    gap: 8px;
    margin-top: 14px;
}

.trait {
    display: flex;
    align-items: center;
    gap: 12px;
    height: 64px;
    padding: 0 13px;
    border: 2px solid #6c6761;
    border-radius: 10px;
    background-color: #3d3731;
    color: #a8a198;
}

.faces {
    display: flex;
    gap: 1px;
}

.spouse {
    margin-bottom: 2px;
    color: #85aedb;
    text-decoration: none;
}

.btn-divorce {
    margin-bottom: 2px;
    vertical-align: top;
}

.log {
    list-style: none;
}

.log li {
    display: flex;
    align-items: center;
    gap: 31px;
    height: 71px;
    border-bottom: 2px solid #322d26;
}

.log time {
    color: #857b6f;
}

/* Phone chrome */
.statusbar {
    position: fixed;
    top: 0;
    left: 0;
    right: 0;
    display: flex;
    align-items: center;
    height: 93px;
    padding: 0 63px 0 69px;
    color: #fff;
}

.carriers {
    display: flex;
    flex-direction: column;
    font-size: 23px;
    font-weight: 500;
    line-height: 34px;
}

.clock {
    margin: 0 9px 0 6px;
    font-size: 38px;
    font-weight: 500;
}

.alarm {
    width: 34px;
    height: 34px;
}

.signals {
    width: 224px;
    height: 40px;
    margin-left: auto;
}

.signals text {
    fill: #fff;
    font-size: 20px;
    font-weight: 700;
}

.signals .charge {
    font-size: 28px;
    text-anchor: middle;
}

.capsule {
    position: fixed;
    top: 129px;
    right: 38px;
    display: flex;
    align-items: center;
    width: 253px;
    height: 100px;
    border: 3px solid rgba(255, 255, 255, 0.22);
    border-radius: 50px;
    background-color: rgba(0, 0, 0, 0.35);
}

.capsule button {
    display: flex;
    flex: 1;
    align-items: center;
    justify-content: center;
    height: 64px;
}

.capsule button + button {
    border-left: 3px solid rgba(255, 255, 255, 0.22);
}

.capsule svg {
    height: 54px;
    fill: #fff;
}

.capsule button:first-child svg {
    width: 54px;
}

.open {
    position: fixed;
    top: 1047px;
    right: 42px;
    width: 129px;
    height: 129px;
    border-radius: 14px;
    background-color: #c83232;
    color: #fff;
    font-size: 78px;
    line-height: 124px;
}
```
